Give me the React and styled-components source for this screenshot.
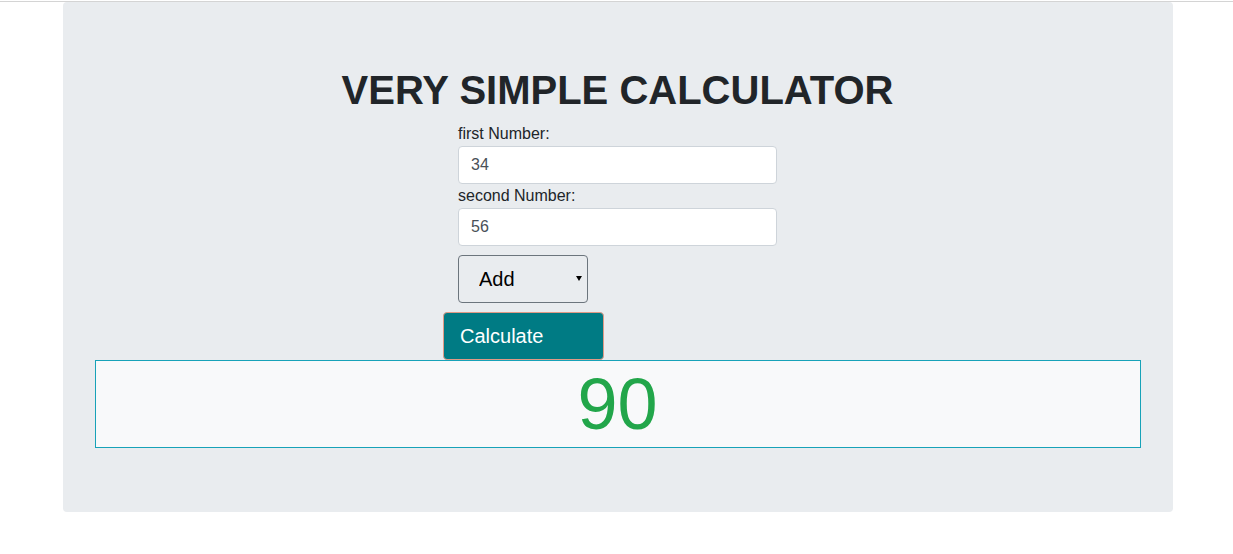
import React, { useState } from "react";
import styled, { createGlobalStyle } from "styled-components";

const Global = createGlobalStyle`
  * { box-sizing: border-box; }
  html, body { margin: 0; padding: 0; background: #fff; }
  body {
    font-family: "Liberation Sans", Arial, sans-serif;
    font-size: 16px;
    line-height: 1.5;
    color: #212529;
  }
`;

const TopRule = styled.div`
  margin-top: 1px;
  border-top: 1px solid #d4d4d4;
`;

const Container = styled.div`
  width: 1140px;
  margin: 0 auto;
  padding: 0 14px 0 16px;
`;

const Jumbotron = styled.div`
  background: #e9ecef;
  border-radius: 4px;
  padding: 64px 32px;
`;

const Title = styled.h1`
  margin: 0 0 8px;
  font-size: 40px;
  font-weight: 700;
  line-height: 1.2;
  text-align: center;
  color: #212529;
`;

const Form = styled.div`
  width: 319px;
  margin: 0 auto;
  display: flex;
  flex-direction: column;
  align-items: flex-start;
`;

const Label = styled.label`
  display: block;
  font-size: 16px;
  line-height: 24px;
  color: #212529;
`;

const Input = styled.input`
  width: 100%;
  height: 38px;
  padding: 6px 12px;
  font-family: inherit;
  font-size: 16px;
  color: #495057;
  background: #fff;
  border: 1px solid #ced4da;
  border-radius: 4px;
  outline: none;
`;

const SelectWrap = styled.div`
  position: relative;
  margin-top: 9px;
  width: 130px;
  height: 48px;
`;

const Select = styled.select`
  appearance: none;
  -webkit-appearance: none;
  width: 100%;
  height: 100%;
  padding: 0 0 0 20px;
  font-family: inherit;
  font-size: 20px;
  color: #000;
  background: transparent;
  border: 1px solid #6c757d;
  border-radius: 4px;
  outline: none;
`;

const Caret = styled.span`
  position: absolute;
  right: 6px;
  top: 21px;
  width: 0;
  height: 0;
  border-left: 3.5px solid transparent;
  border-right: 3.5px solid transparent;
  border-top: 5px solid #000;
  pointer-events: none;
`;

const Button = styled.button`
  margin-top: 9px;
  margin-left: -15px;
  width: 161px;
  height: 48px;
  padding: 0 16px;
  text-align: left;
  font-family: inherit;
  font-size: 20px;
  color: #fff;
  background: #007b84;
  border: 1px solid #e09a86;
  border-radius: 4px;
  cursor: pointer;
`;

const Result = styled.div`
  border: 1px solid #17a2b8;
  background: #f8f9fa;
  text-align: center;
  font-size: 72px;
  line-height: 1.2;
  color: #22a64a;
`;

export default function App() {
  const [a, setA] = useState("34");
  const [b, setB] = useState("56");
  const [op, setOp] = useState("add");
  const na = parseFloat(a) || 0;
  const nb = parseFloat(b) || 0;
  const calc = () => {
    if (op === "add") return na + nb;
    if (op === "sub") return na - nb;
    if (op === "mul") return na * nb;
    return nb ? na / nb : 0;
  };
  const [result, setResult] = useState(90);

  return (
    <>
      <Global />
      <TopRule />
      <Container>
        <Jumbotron>
          <Title>VERY SIMPLE CALCULATOR</Title>
          <Form>
            <Label>first Number:</Label>
            <Input value={a} onChange={(e) => setA(e.target.value)} />
            <Label>second Number:</Label>
            <Input value={b} onChange={(e) => setB(e.target.value)} />
            <SelectWrap>
              <Select value={op} onChange={(e) => setOp(e.target.value)}>
                <option value="add">Add</option>
                <option value="sub">Subtract</option>
                <option value="mul">Multiply</option>
                <option value="div">Divide</option>
              </Select>
              <Caret />
            </SelectWrap>
            <Button onClick={() => setResult(calc())}>Calculate</Button>
          </Form>
          <Result>{result}</Result>
        </Jumbotron>
      </Container>
    </>
  );
}
